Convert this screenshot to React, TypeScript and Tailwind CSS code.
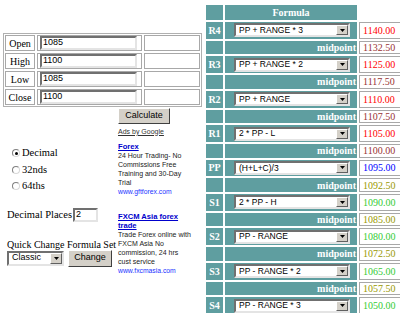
const serif = "font-['Liberation_Serif','Times_New_Roman',serif]";
const sans = "font-['Liberation_Sans',Arial,sans-serif]";

type Row =
  | { kind: "pick"; label: string; formula: string; value: string; color: string }
  | { kind: "mid"; value: string; color: string };

const rows: Row[] = [
  { kind: "pick", label: "R4", formula: "PP + RANGE * 3", value: "1140.00", color: "text-[#ff0000]" },
  { kind: "mid", value: "1132.50", color: "text-[#993333]" },
  { kind: "pick", label: "R3", formula: "PP + RANGE * 2", value: "1125.00", color: "text-[#ff0000]" },
  { kind: "mid", value: "1117.50", color: "text-[#993333]" },
  { kind: "pick", label: "R2", formula: "PP + RANGE", value: "1110.00", color: "text-[#ff0000]" },
  { kind: "mid", value: "1107.50", color: "text-[#993333]" },
  { kind: "pick", label: "R1", formula: "2 * PP - L", value: "1105.00", color: "text-[#ff0000]" },
  { kind: "mid", value: "1100.00", color: "text-[#993333]" },
  { kind: "pick", label: "PP", formula: "(H+L+C)/3", value: "1095.00", color: "text-[#0000ff]" },
  { kind: "mid", value: "1092.50", color: "text-[#999900]" },
  { kind: "pick", label: "S1", formula: "2 * PP - H", value: "1090.00", color: "text-[#33cc33]" },
  { kind: "mid", value: "1085.00", color: "text-[#999900]" },
  { kind: "pick", label: "S2", formula: "PP - RANGE", value: "1080.00", color: "text-[#33cc33]" },
  { kind: "mid", value: "1072.50", color: "text-[#999900]" },
  { kind: "pick", label: "S3", formula: "PP - RANGE * 2", value: "1065.00", color: "text-[#33cc33]" },
  { kind: "mid", value: "1057.50", color: "text-[#999900]" },
  { kind: "pick", label: "S4", formula: "PP - RANGE * 3", value: "1050.00", color: "text-[#33cc33]" },
];

const ohlc = [
  ["Open", "1085"],
  ["High", "1100"],
  ["Low", "1085"],
  ["Close", "1100"],
];

// old windows style drop button
function DropButton() {
  return (
    <span className="flex items-center justify-center w-[12px] h-full bg-[#d4d0c8] border border-t-white border-l-white border-b-[#606060] border-r-[#606060]">
      <svg width="5" height="3" viewBox="0 0 5 3">
        <path d="M0 0h5L2.5 3z" fill="#000" />
      </svg>
    </span>
  );
}

function Select({ text, className }: { text: string; className: string }) {
  return (
    <div
      className={`flex items-stretch bg-white border-2 border-t-[#707070] border-l-[#707070] border-b-[#e4e4e4] border-r-[#e4e4e4] ${className}`}
    >
      <span className={`flex-1 flex items-center pl-[3px] text-black ${sans} whitespace-nowrap overflow-hidden`}>
        {text}
      </span>
      <DropButton />
    </div>
  );
}

function Radio({ checked, label }: { checked?: boolean; label: string }) {
  return (
    <div className="h-[16.5px] flex items-center pl-[12px] gap-[2px]">
      <span className="w-[8px] h-[8px] rounded-full bg-white border border-t-[#808080] border-l-[#808080] border-b-[#d8d8d8] border-r-[#d8d8d8] flex items-center justify-center">
        {checked && <span className="w-[3px] h-[3px] rounded-full bg-black" />}
      </span>
      <span className={`${serif} text-[10.5px] text-black`}>{label}</span>
    </div>
  );
}

function Ad({ title, lines, url }: { title: string[]; lines: string[]; url: string }) {
  return (
    <div className={`${sans} text-[7px] leading-[9px] text-[#222]`}>
      {title.map((t) => (
        <div key={t} className="font-bold text-[7.6px] text-[#0000cc] underline">
          {t}
        </div>
      ))}
      {lines.map((l) => (
        <div key={l}>{l}</div>
      ))}
      <div className="text-[6.8px] text-[#2233ff]">{url}</div>
    </div>
  );
}

export default function App() {
  return (
    <div className="w-[400px] h-[313px] overflow-hidden bg-white flex">
      {/* left: inputs + options */}
      <div className="w-[206px] shrink-0 flex flex-col pt-[33px]">
        <div className="ml-[3px] w-[199px] border border-[#b0b0b0] p-[1px] grid grid-cols-[30px_105px_56px] auto-rows-[16px] gap-[2px]">
          {ohlc.map(([label, val]) => (
            <div key={label} className="contents">
              <div className={`border border-[#a8a8a8] flex items-center justify-center ${serif} text-[10px] text-black`}>
                {label}
              </div>
              <div className="border border-[#a8a8a8] flex items-center pl-[2px]">
                <div className={`w-[97px] h-[14px] bg-white border-2 border-t-[#707070] border-l-[#707070] border-b-[#e4e4e4] border-r-[#e4e4e4] flex items-center pl-[1px] ${sans} text-[9px] text-black`}>
                  {val}
                </div>
              </div>
              <div className="border border-[#a8a8a8]" />
            </div>
          ))}
        </div>

        <div className="flex">
          <div className="w-[118px] shrink-0 flex flex-col pt-[38px]">
            <Radio checked label="Decimal" />
            <Radio label="32nds" />
            <Radio label="64ths" />
            <div className="mt-[13px] h-[15px] flex items-center pl-[7px] gap-[1px]">
              <span className={`${serif} text-[10.5px] text-black`}>Decimal Places</span>
              <div className={`w-[25px] h-[14px] bg-white border-2 border-t-[#707070] border-l-[#707070] border-b-[#e4e4e4] border-r-[#e4e4e4] flex items-center pl-[1px] ${sans} text-[9px] text-black`}>
                2
              </div>
            </div>
            <div className={`mt-[16px] pl-[7px] ${serif} text-[10px] leading-[11px] whitespace-nowrap text-black`}>
              Quick Change Formula Set
            </div>
            <div className="pl-[7px] flex items-center gap-[4px] h-[17px]">
              <Select text="Classic" className="w-[57px] h-[15px] text-[9px]" />
              <button className={`w-[44px] h-[17px] bg-[#d4d0c8] border border-t-white border-l-white border-b-[#404040] border-r-[#404040] ${sans} text-[9px] text-black`}>
                Change
              </button>
            </div>
          </div>

          <div className="flex flex-col pt-[1px]">
            <button className={`w-[52px] h-[16px] bg-[#d4d0c8] border border-t-white border-l-white border-b-[#404040] border-r-[#404040] ${sans} text-[9px] text-black`}>
              Calculate
            </button>
            <div className={`mt-[2.5px] ${sans} text-[7px] leading-[9px] text-[#333] underline`}>Ads by Google</div>
            <div className="mt-[6px]">
              <Ad
                title={["Forex"]}
                lines={["24 Hour Trading- No", "Commissions Free", "Training and 30-Day", "Trial"]}
                url="www.gftforex.com"
              />
            </div>
            <div className="mt-[16px]">
              <Ad
                title={["FXCM Asia forex", "trade"]}
                lines={["Trade Forex online with", "FXCM Asia No", "commission, 24 hrs", "cust service"]}
                url="www.fxcmasia.com"
              />
            </div>
          </div>
        </div>
      </div>

      {/* right: formula table */}
      <div className="flex-1 pt-[5px]">
        <div className="grid grid-cols-[17px_132px_60px] gap-[2px]">
          <div className="h-[15px] bg-[#5f9ea0]" />
          <div className={`h-[15px] bg-[#5f9ea0] flex items-center justify-center ${serif} font-bold text-[10px] text-white`}>
            Formula
          </div>
          <div />
          {rows.map((r, i) =>
            r.kind === "pick" ? (
              <div key={i} className="contents">
                <div className={`h-[16.8px] bg-[#5f9ea0] flex items-center justify-center ${serif} font-bold text-[10px] text-white`}>
                  {r.label}
                </div>
                <div className="h-[16.8px] bg-[#5f9ea0] flex items-center pl-[9px]">
                  <Select text={r.formula} className="w-[116px] h-[14px] text-[8.5px]" />
                </div>
                <div className={`h-[16.8px] border border-[#a8a8a8] flex items-center pl-[3px] ${serif} text-[10px] ${r.color}`}>
                  {r.value}
                </div>
              </div>
            ) : (
              <div key={i} className="contents">
                <div className="h-[13.6px] bg-[#5f9ea0]" />
                <div className={`h-[13.6px] bg-[#5f9ea0] flex items-center justify-end pr-[1px] ${serif} font-bold text-[10px] text-white`}>
                  midpoint
                </div>
                <div className={`h-[13.6px] border border-[#a8a8a8] flex items-center pl-[3px] ${serif} text-[10px] ${r.color}`}>
                  {r.value}
                </div>
              </div>
            )
          )}
        </div>
      </div>
    </div>
  );
}
